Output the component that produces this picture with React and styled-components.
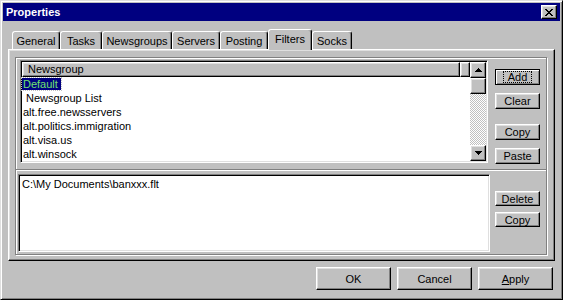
import React from 'react';
import styled, { createGlobalStyle, css } from 'styled-components';

const GlobalStyle = createGlobalStyle`
  html, body {
    margin: 0;
    padding: 0;
    background: #c0c0c0;
  }
  body {
    font-family: "Liberation Sans", Arial, sans-serif;
    font-size: 11px;
    color: #000;
  }
  * {
    box-sizing: border-box;
  }
`;

const raised = css`
  border-style: solid;
  border-width: 1px;
  border-color: #fff #000 #000 #fff;
  box-shadow: inset -1px -1px #808080, inset 1px 1px #dfdfdf;
`;

const sunken = css`
  border-style: solid;
  border-width: 1px;
  border-color: #808080 #fff #fff #808080;
  box-shadow: inset 1px 1px #000, inset -1px -1px #dfdfdf;
  padding: 1px;
`;

const Window = styled.div`
  width: 563px;
  height: 300px;
  background: #c0c0c0;
  border-style: solid;
  border-width: 1px;
  border-color: #dfdfdf #000 #000 #dfdfdf;
  box-shadow: inset 1px 1px #fff, inset -1px -1px #808080;
  padding: 2px;
  display: flex;
  flex-direction: column;
`;

const TitleBar = styled.div`
  height: 18px;
  background: #000080;
  display: flex;
  align-items: center;
  justify-content: space-between;
  padding: 0 3px 0 3px;
`;

const Title = styled.span`
  color: #fff;
  font-weight: bold;
  font-size: 11px;
`;

const CloseButton = styled.div`
  width: 16px;
  height: 14px;
  background: #c0c0c0;
  ${raised};
  display: flex;
  align-items: center;
  justify-content: center;
`;

const Body = styled.div`
  flex: 1;
  display: flex;
  flex-direction: column;
  padding: 8px 5px 0;
`;

const TabRow = styled.div`
  display: flex;
  align-items: flex-end;
  height: 20px;
  padding-left: 4px;
`;

const Tab = styled.div`
  width: ${(p) => p.$w}px;
  height: ${(p) => (p.$active ? 21 : 18)}px;
  margin-bottom: ${(p) => (p.$active ? -1 : 0)}px;
  padding-bottom: ${(p) => (p.$active ? 2 : 0)}px;
  background: #c0c0c0;
  border-style: solid;
  border-width: 1px 1px 0 1px;
  border-color: #fff #000 transparent #fff;
  border-radius: 3px 3px 0 0;
  box-shadow: inset -1px 0 #808080;
  display: flex;
  align-items: center;
  justify-content: center;
  white-space: nowrap;
  position: relative;
  z-index: ${(p) => (p.$active ? 2 : 1)};
`;

const Panel = styled.div`
  height: 212px;
  ${raised};
  padding: 7px 7px 5px 6px;
  display: flex;
`;

const Group = styled.div`
  flex: 1;
  border: 1px solid #808080;
  box-shadow: inset 1px 1px #fff, 1px 1px #fff;
  display: flex;
  flex-direction: column;
`;

const Section = styled.div`
  display: flex;
  height: ${(p) => p.$h}px;
  flex: ${(p) => (p.$h ? 'none' : 1)};
`;

const Divider = styled.div`
  height: 2px;
  border-top: 1px solid #808080;
  border-bottom: 1px solid #fff;
`;

const ListView = styled.div`
  width: 468px;
  height: 103px;
  margin: 2px 0 0 4px;
  background: #fff;
  ${sunken};
  display: flex;
`;

const ListMain = styled.div`
  flex: 1;
  display: flex;
  flex-direction: column;
`;

const Header = styled.div`
  display: flex;
  height: 15px;
`;

const HeaderCell = styled.div`
  width: ${(p) => (p.$w ? `${p.$w}px` : 'auto')};
  flex: ${(p) => (p.$w ? 'none' : 1)};
  background: #c0c0c0;
  ${raised};
  padding-left: 5px;
  line-height: 13px;
`;

const Row = styled.div`
  height: 14px;
  line-height: 14px;
  padding-left: ${(p) => p.$indent}px;
  white-space: nowrap;
`;

const Selected = styled.span`
  background: #000080;
  color: #70e070;
  outline: 1px dotted #c0c0c0;
  padding: 0 3px 0 1px;
  display: inline-block;
  line-height: 12px;
`;

const ScrollBar = styled.div`
  width: 16px;
  display: flex;
  flex-direction: column;
`;

const ScrollButton = styled.div`
  width: 16px;
  height: ${(p) => p.$h || 16}px;
  background: #c0c0c0;
  ${raised};
  display: flex;
  align-items: center;
  justify-content: center;
`;

const Track = styled.div`
  flex: 1;
  background-color: #c0c0c0;
  background-image: conic-gradient(#fff 25%, #c0c0c0 0 50%, #fff 0 75%, #c0c0c0 0);
  background-size: 2px 2px;
`;

const FileList = styled.div`
  width: 472px;
  height: 78px;
  margin: 3px 0 0 2px;
  background: #fff;
  ${sunken};
  padding: 2px 3px;
  line-height: 14px;
`;

const ButtonColumn = styled.div`
  display: flex;
  flex-direction: column;
  margin-left: ${(p) => p.$ml}px;
`;

const SideButton = styled.div`
  width: 45px;
  height: ${(p) => p.$h || 16}px;
  margin-top: ${(p) => p.$mt}px;
  background: #c0c0c0;
  ${raised};
  ${(p) =>
    p.$default &&
    css`
      border-color: #000;
      box-shadow: inset 1px 1px #fff, inset -1px -1px #808080, inset -2px -2px #c0c0c0;
    `}
  display: flex;
  align-items: center;
  justify-content: center;
`;

const Focus = styled.span`
  outline: 1px dotted #000;
  padding: 0 4px;
  line-height: 10px;
`;

const Footer = styled.div`
  display: flex;
  justify-content: flex-end;
  gap: 6px;
  padding: 6px 2px 0 0;
`;

const DialogButton = styled.div`
  width: 75px;
  height: 23px;
  background: #c0c0c0;
  ${raised};
  display: flex;
  align-items: center;
  justify-content: center;
`;

const CloseGlyph = () => (
  <svg width="8" height="7" viewBox="0 0 8 7" shapeRendering="crispEdges">
    <path
      d="M0 0h2v1H0zM6 0h2v1H6zM1 1h2v1H1zM5 1h2v1H5zM2 2h4v1H2zM3 3h2v1H3zM2 4h4v1H2zM1 5h2v1H1zM5 5h2v1H5zM0 6h2v1H0zM6 6h2v1H6z"
      fill="#000"
    />
  </svg>
);

const Arrow = ({ down }) => (
  <svg width="7" height="4" viewBox="0 0 7 4" shapeRendering="crispEdges">
    <path
      d={down ? 'M0 0h7v1H0zM1 1h5v1H1zM2 2h3v1H2zM3 3h1v1H3z' : 'M3 0h1v1H3zM2 1h3v1H2zM1 2h5v1H1zM0 3h7v1H0z'}
      fill="#000"
    />
  </svg>
);

const tabs = [
  { label: 'General', w: 48 },
  { label: 'Tasks', w: 42 },
  { label: 'Newsgroups', w: 70 },
  { label: 'Servers', w: 48 },
  { label: 'Posting', w: 48 },
  { label: 'Filters', w: 44, active: true },
  { label: 'Socks', w: 40 },
];

const groups = [
  { name: 'Newsgroup List', indent: 4 },
  { name: 'alt.free.newsservers', indent: 1 },
  { name: 'alt.politics.immigration', indent: 1 },
  { name: 'alt.visa.us', indent: 1 },
  { name: 'alt.winsock', indent: 1 },
];

const App = () => {
  return (
    <>
      <GlobalStyle />
      <Window>
        <TitleBar>
          <Title>Properties</Title>
          <CloseButton>
            <CloseGlyph />
          </CloseButton>
        </TitleBar>
        <Body>
          <TabRow>
            {tabs.map((t) => (
              <Tab key={t.label} $w={t.w} $active={t.active}>
                {t.label}
              </Tab>
            ))}
          </TabRow>
          <Panel>
            <Group>
              {/* newsgroup list */}
              <Section $h={111}>
                <ListView>
                  <ListMain>
                    <Header>
                      <HeaderCell $w={438}>Newsgroup</HeaderCell>
                      <HeaderCell />
                    </Header>
                    <Row $indent={0}>
                      <Selected>Default</Selected>
                    </Row>
                    {groups.map((g) => (
                      <Row key={g.name} $indent={g.indent}>
                        {g.name}
                      </Row>
                    ))}
                  </ListMain>
                  <ScrollBar>
                    <ScrollButton>
                      <Arrow />
                    </ScrollButton>
                    <ScrollButton />
                    <Track />
                    <ScrollButton>
                      <Arrow down />
                    </ScrollButton>
                  </ScrollBar>
                </ListView>
                <ButtonColumn $ml={7}>
                  <SideButton $mt={11} $default>
                    <Focus>Add</Focus>
                  </SideButton>
                  <SideButton $mt={8}>Clear</SideButton>
                  <SideButton $mt={15}>Copy</SideButton>
                  <SideButton $mt={8}>Paste</SideButton>
                </ButtonColumn>
              </Section>
              <Divider />
              {/* filter files */}
              <Section>
                <FileList>C:\My Documents\banxxx.flt</FileList>
                <ButtonColumn $ml={5}>
                  <SideButton $mt={20} $h={15}>Delete</SideButton>
                  <SideButton $mt={6} $h={15}>Copy</SideButton>
                </ButtonColumn>
              </Section>
            </Group>
          </Panel>
          <Footer>
            <DialogButton>OK</DialogButton>
            <DialogButton>Cancel</DialogButton>
            <DialogButton>
              <span>
                <u>A</u>pply
              </span>
            </DialogButton>
          </Footer>
        </Body>
      </Window>
    </>
  );
};

export default App;
